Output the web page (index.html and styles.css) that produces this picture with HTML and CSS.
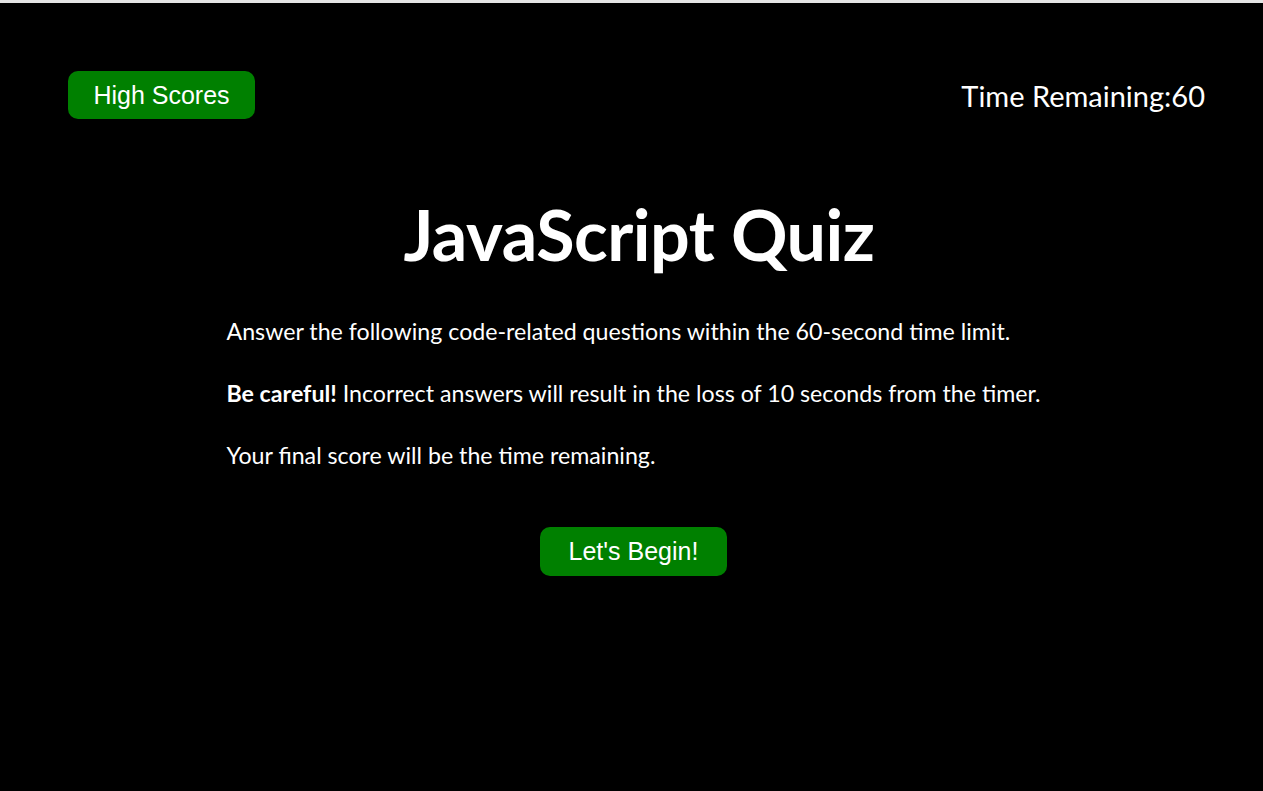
FILE: index.html
```html
<!DOCTYPE html>
<html lang="en">
<head>
<meta charset="utf-8">
<title>JavaScript Quiz</title>
<link rel="stylesheet" href="styles.css">
</head>
<body>
<div class="topline"></div>
<header class="header">
  <button class="btn">High Scores</button>
  <div class="timer">Time Remaining:60</div>
</header>
<main class="main">
  <h1 class="title">JavaScript Quiz</h1>
  <div class="intro">
    <p>Answer the following code-related questions within the 60-second time limit.</p>
    <p><strong>Be careful!</strong> Incorrect answers will result in the loss of 10 seconds from the timer.</p>
    <p>Your final score will be the time remaining.</p>
  </div>
  <div class="start">
    <button class="btn">Let's Begin!</button>
  </div>
</main>
</body>
</html>
```

FILE: styles.css
```css
html, body {
  margin: 0;
  padding: 0;
  background: #000;
  color: #fff;
  font-family: Lato, "Open Sans", sans-serif;
  height: 100%;
}
.topline {
  height: 3px;
  background: #e4e4e4;
}
.header {
  display: flex;
  justify-content: space-between;
  align-items: center;
  padding: 68px 58px 0 68px;
}
.btn {
  background: #008000;
  color: #fff;
  border: none;
  border-radius: 10px;
  font-family: "Liberation Sans", Arial, sans-serif;
  font-size: 25px;
  width: 187px;
  height: 48px;
  padding: 0;
  cursor: pointer;
}
.timer {
  font-size: 29px;
}
.main {
  width: 810px;
  margin: 0 auto;
}
.title {
  text-align: center;
  font-size: 70px;
  font-weight: 700;
  margin: 73px 0 41px;
  padding-left: 15px;
  letter-spacing: -0.5px;
}
.intro p {
  font-size: 23.2px;
  margin: 0 0 34px;
  white-space: nowrap;
}
.start {
  display: flex;
  justify-content: center;
  padding-top: 24px;
  padding-left: 4px;
}
.start .btn {
  height: 49px;
}
```
